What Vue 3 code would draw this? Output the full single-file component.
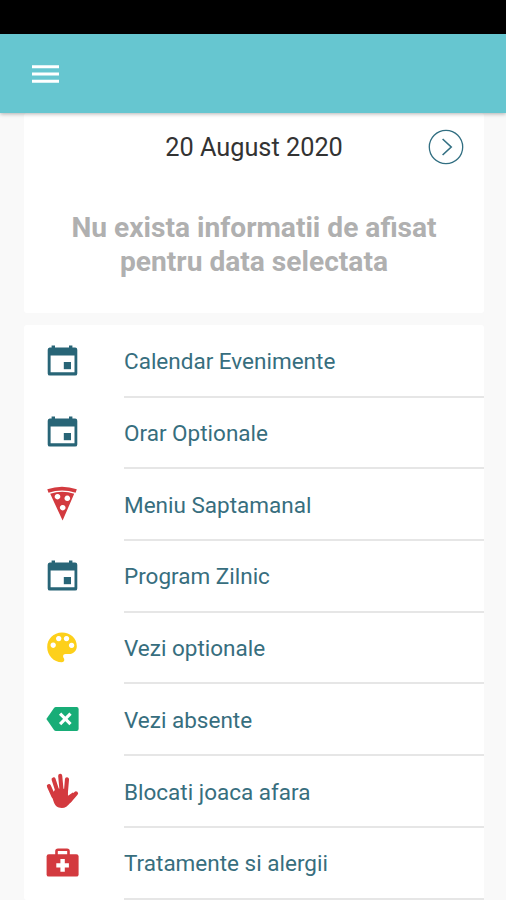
<script setup>
const items = [
  { label: 'Calendar Evenimente', icon: 'calendar' },
  { label: 'Orar Optionale', icon: 'calendar' },
  { label: 'Meniu Saptamanal', icon: 'pizza' },
  { label: 'Program Zilnic', icon: 'calendar' },
  { label: 'Vezi optionale', icon: 'palette' },
  { label: 'Vezi absente', icon: 'backspace' },
  { label: 'Blocati joaca afara', icon: 'hand' },
  { label: 'Tratamente si alergii', icon: 'medkit' },
]
</script>

<template>
  <div class="screen">
    <div class="status"></div>
    <header class="toolbar">
      <svg class="burger" viewBox="0 0 27 18">
        <path d="M0 1.75h27M0 9h27M0 16.25h27" stroke="#fff" stroke-width="3.2" />
      </svg>
    </header>
    <main class="content">
      <section class="card day">
        <div class="date-row">
          <span class="date">20 August 2020</span>
          <svg class="next" viewBox="0 0 36 36" fill="none" stroke="#326f82">
            <circle cx="18" cy="18" r="16.7" stroke-width="1.3" />
            <path d="M14.6 10l8.6 8-8.6 8" stroke-width="1.6" />
          </svg>
        </div>
        <p class="message">Nu exista informatii de afisat<br />pentru data selectata</p>
      </section>
      <ul class="card menu">
        <li v-for="item in items" :key="item.label" class="item">
          <svg class="icon" :class="item.icon" viewBox="0 0 32 32">
            <template v-if="item.icon === 'calendar'">
              <path fill-rule="evenodd" d="M3.7 1.5h1.900V-.4h3.400v1.900H23V-.4h3.400v1.900h2.700a2.200 2.200 0 0 1 2.200 2.200v23.700a2.200 2.200 0 0 1-2.200 2.200H3.900a2.200 2.200 0 0 1-2.200-2.200V3.700a2.200 2.200 0 0 1 2-2.200zM4.600 9.600v16.700h23.900V9.600z" />
              <path d="M17.800 16h7.200v7.200h-7.200z" />
            </template>
            <template v-else-if="item.icon === 'pizza'">
              <path d="M1.300 .2Q16 -4.800 30.800 .2L29.600 3.700Q16 -.9 2.500 3.700z" />
              <path fill-rule="evenodd" d="M4.200 4.800Q16 .6 28.200 4.800L16.600 31.600zM11.500 4.900a2.800 2.800 0 1 0 .01 0zM21.300 6.500a2.800 2.800 0 1 0 .01 0zM16.700 15.900a2.800 2.800 0 1 0 .01 0z" />
            </template>
            <template v-else-if="item.icon === 'palette'">
              <path fill-rule="evenodd" d="M16 -.4C7.600-.4 1.200 6 1.200 14.200S7.800 29.200 15.800 29.200c1.600 0 2.500-.9 2.500-2.400 0-1.600-1.200-2.200-1.200-3.600 0-1.300 1-2.200 2.400-2.200h3.400c4.600 0 7.900-3.300 7.900-7.800C30.800 5.200 24.200-.4 16-.4zM12.700 2.900a2.700 2.700 0 1 1-.01 0zM20.500 2.900a2.700 2.700 0 1 1-.01 0zM7.200 9.500a2.700 2.700 0 1 1-.01 0zM25.600 9.700a2.700 2.700 0 1 1-.01 0z" />
            </template>
            <template v-else-if="item.icon === 'backspace'">
              <path d="M.4 14.900L8 3.900q.7-1 2-1h20.600a2 2 0 0 1 2 2v20a2 2 0 0 1-2 2H10q-1.300 0-2-1z" />
              <path d="M14.100 9.700l10.400 10.400M24.500 9.700L14.100 20.100" stroke="#fff" stroke-width="3.200" />
            </template>
            <template v-else-if="item.icon === 'hand'">
              <path d="M2.900 10.200l4.500 10M7.600 3.400l4.200 13M14.200-.1l1.500 16M21 3.200l-1.200 14M30 17.300l-6.500 7.500" fill="none" stroke="#d33a3f" stroke-width="4.100" stroke-linecap="round" />
              <path d="M5.300 18.500L10 12.500l11.700.5.300 6.700 4.800-3.200 3.600 1.800-6.300 8.700c-2.400 3-4.900 5-8.300 5-4.400 0-7.200-2.800-8.200-6.500z" />
            </template>
            <template v-else>
              <path d="M10.500 8V3.300q0-1.500 1.500-1.500h9q1.500 0 1.500 1.500V8" fill="none" stroke="#d33a3f" stroke-width="2.600" />
              <rect x=".6" y="6.200" width="32" height="22.400" rx="2.200" />
              <path d="M14.400 11.100h4.400v4.100h4.100v4.400h-4.100v4.100h-4.400v-4.100h-4.100v-4.400h4.100z" fill="#fff" />
            </template>
          </svg>
          <span class="label">{{ item.label }}</span>
        </li>
      </ul>
    </main>
  </div>
</template>

<style>
body {
  margin: 0;
  background: #f9f9f9;
}
</style>

<style scoped>
.screen {
  height: 900px;
  overflow: hidden;
  display: flex;
  flex-direction: column;
  background: #f9f9f9;
  font-family: Roboto, sans-serif;
}
.status {
  flex: none;
  height: 34px;
  background: #000;
}
.toolbar {
  flex: none;
  height: 79px;
  box-sizing: border-box;
  padding: 1px 32px 0;
  display: flex;
  align-items: center;
  background: #66c6d0;
  box-shadow: 0 1px 4px rgba(0, 0, 0, 0.3);
  z-index: 1;
}
.burger {
  width: 27px;
  height: 18px;
}
.content {
  display: flex;
  flex-direction: column;
  gap: 12px;
  padding: 0 22px 0 24px;
}
.card {
  background: #fff;
  border-radius: 3px;
}
.day {
  height: 200px;
}
.date-row {
  height: 68px;
  display: grid;
  grid-template-columns: 1fr auto 1fr;
  align-items: center;
}
.date {
  grid-column: 2;
  font-size: 25.3px;
  color: #333;
}
.next {
  width: 36px;
  height: 36px;
  justify-self: end;
  margin-right: 20px;
}
.message {
  margin: 30px 0 0;
  font-size: 28.15px;
  line-height: 34px;
  font-weight: 700;
  text-align: center;
  color: #b0b0b0;
}
.menu {
  margin: 0;
  padding: 0.8px 0 0;
  list-style: none;
}
.item {
  height: 71.72px;
  display: flex;
  align-items: center;
  padding-left: 22px;
}
.icon {
  flex: none;
  width: 32px;
  height: 32px;
  overflow: visible;
  fill: #d33a3f;
}
.calendar {
  fill: #286577;
}
.palette {
  fill: #fdd01b;
}
.backspace {
  fill: #18ad77;
}
.label {
  flex: 1;
  box-sizing: border-box;
  height: 100%;
  margin-left: 46px;
  padding-top: 0.4px;
  border-bottom: 2px solid #e6e6e6;
  font-size: 22.5px;
  line-height: 71px;
  color: #376e7e;
}
</style>
